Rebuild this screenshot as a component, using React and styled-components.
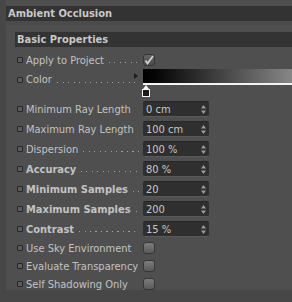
import React from "react";
import styled, { createGlobalStyle } from "styled-components";

const Global = createGlobalStyle`
  html, body {
    margin: 0;
    padding: 0;
    background: #474747;
  }
  body {
    font-family: "DejaVu Sans Condensed", "Liberation Sans", sans-serif;
    font-size: 11px;
    color: #c2c2c2;
  }
`;

const Frame = styled.div`
  width: 292px;
  height: 302px;
  padding-left: 6px;
  box-sizing: border-box;
  overflow: hidden;
`;

const Panel = styled.div`
  height: 290px;
  padding-top: 6px;
  box-sizing: border-box;
  background: #4f4f4f;
`;

const GroupTitle = styled.div`
  height: 15px;
  line-height: 15px;
  background: #333;
  padding-left: 2px;
  font-weight: bold;
  color: #c8c8c8;
  border-bottom: 4px solid #4b4b4b;
`;

const Section = styled.div`
  padding-left: 9px;
  margin-top: 7px;
`;

const SectionTitle = styled.div`
  height: 15px;
  line-height: 15px;
  background: #333;
  padding-left: 2px;
  font-weight: bold;
  color: #c8c8c8;
`;

const Rows = styled.div`
  margin-top: 4px;
  padding-left: 2px;
`;

const Row = styled.div`
  display: flex;
  align-items: ${(p) => (p.$top ? "flex-start" : "center")};
  height: ${(p) => p.$h}px;
`;

const Label = styled.div`
  width: 126px;
  display: flex;
  align-items: center;
  flex: none;
  margin-top: ${(p) => p.$offset || 0}px;
  font-weight: ${(p) => (p.$bold ? "bold" : "normal")};
  white-space: nowrap;
`;

const Bullet = styled.span`
  width: 4px;
  height: 4px;
  border: 1px solid #262626;
  background: #5c5c5c;
  border-radius: 1px;
  margin-right: 3px;
  flex: none;
`;

const Dots = styled.span`
  flex: 1;
  height: 1px;
  margin: 5px 4px 0 5px;
  background: repeating-linear-gradient(
    to right,
    #a0a0a0 0 1px,
    transparent 1px 5.5px
  );
`;

const Field = styled.div`
  width: 66px;
  height: 16px;
  box-sizing: border-box;
  background: #2f2f2f;
  border-radius: 2px;
  border-bottom: 1px solid #5a5a5a;
  border-top: 1px solid #262626;
  display: flex;
  align-items: center;
  justify-content: space-between;
  padding: 0 3px 0 3px;
  color: #c8c8c8;
`;

const Spinner = styled.svg`
  width: 5px;
  height: 9px;
  flex: none;
`;

const Box = styled.div`
  width: 12px;
  height: 12px;
  box-sizing: border-box;
  border-radius: 3px;
  border: 1px solid #363636;
  background: ${(p) =>
    p.$checked
      ? "linear-gradient(#646464, #4a4a4a)"
      : "linear-gradient(#7c7c7c, #5a5a5a)"};
  display: flex;
  align-items: center;
  justify-content: center;
`;

const ColorArea = styled.div`
  flex: 1;
  display: flex;
  flex-direction: column;
  margin-right: -6px;
  position: relative;
`;

const Ramp = styled.div`
  height: 14px;
  background: linear-gradient(to right, #000 0%, #050505 8%, #8c8c8c 100%);
  border-bottom: 2px solid #f4f4f4;
`;

const Arrow = styled.span`
  position: absolute;
  left: -9px;
  top: 4px;
  width: 0;
  height: 0;
  border-top: 3px solid transparent;
  border-bottom: 3px solid transparent;
  border-left: 4px solid #1e1e1e;
`;

const Knob = styled.svg`
  width: 10px;
  height: 13px;
  margin-left: -2px;
`;

const Control = styled.div`
  display: flex;
  align-items: center;
`;

function Spin() {
  return (
    <Spinner viewBox="0 0 5 9">
      <path d="M2.5 0L5 3.5H0Z" fill="#9c9c9c" />
      <path d="M2.5 9L5 5.5H0Z" fill="#9c9c9c" />
    </Spinner>
  );
}

function Lbl({ text, bold, dots, offset }) {
  return (
    <Label $bold={bold} $offset={offset}>
      <Bullet />
      {text}
      {dots && <Dots />}
    </Label>
  );
}

const fields = [
  ["Minimum Ray Length", "0 cm", false, false],
  ["Maximum Ray Length", "100 cm", false, false],
  ["Dispersion", "100 %", false, true],
  ["Accuracy", "80 %", true, true],
  ["Minimum Samples", "20", true, true],
  ["Maximum Samples", "200", true, true],
  ["Contrast", "15 %", true, true],
];

const toggles = [
  "Use Sky Environment",
  "Evaluate Transparency",
  "Self Shadowing Only",
];

export default function App() {
  return (
    <>
      <Global />
      <Frame>
        <Panel>
          <GroupTitle>Ambient Occlusion</GroupTitle>
          <Section>
            <SectionTitle>Basic Properties</SectionTitle>
            <Rows>
              <Row $h={18}>
                <Lbl text="Apply to Project" dots />
                <Box $checked>
                  <svg width="10" height="10" viewBox="0 0 10 10">
                    <path
                      d="M1.5 5.5L3.5 8.5L9 1"
                      stroke="#d0d0d0"
                      strokeWidth="1.8"
                      fill="none"
                    />
                  </svg>
                </Box>
              </Row>
              <Row $h={30} $top>
                <Lbl text="Color" dots offset={4} />
                <ColorArea>
                  <Arrow />
                  <Ramp />
                  <Knob viewBox="0 0 10 13">
                    <path d="M5 0L8 4H2Z" fill="#f4f4f4" />
                    <rect x="1.5" y="4.5" width="7" height="7" fill="#1a1a1a" stroke="#f4f4f4" />
                  </Knob>
                </ColorArea>
              </Row>
              {fields.map(([t, v, b, d]) => (
                <Row $h={20} key={t}>
                  <Lbl text={t} bold={b} dots={d} />
                  <Field>
                    {v}
                    <Spin />
                  </Field>
                </Row>
              ))}
              {toggles.map((t) => (
                <Row $h={18} key={t}>
                  <Lbl text={t} />
                  <Control>
                    <Box />
                  </Control>
                </Row>
              ))}
            </Rows>
          </Section>
        </Panel>
      </Frame>
    </>
  );
}
